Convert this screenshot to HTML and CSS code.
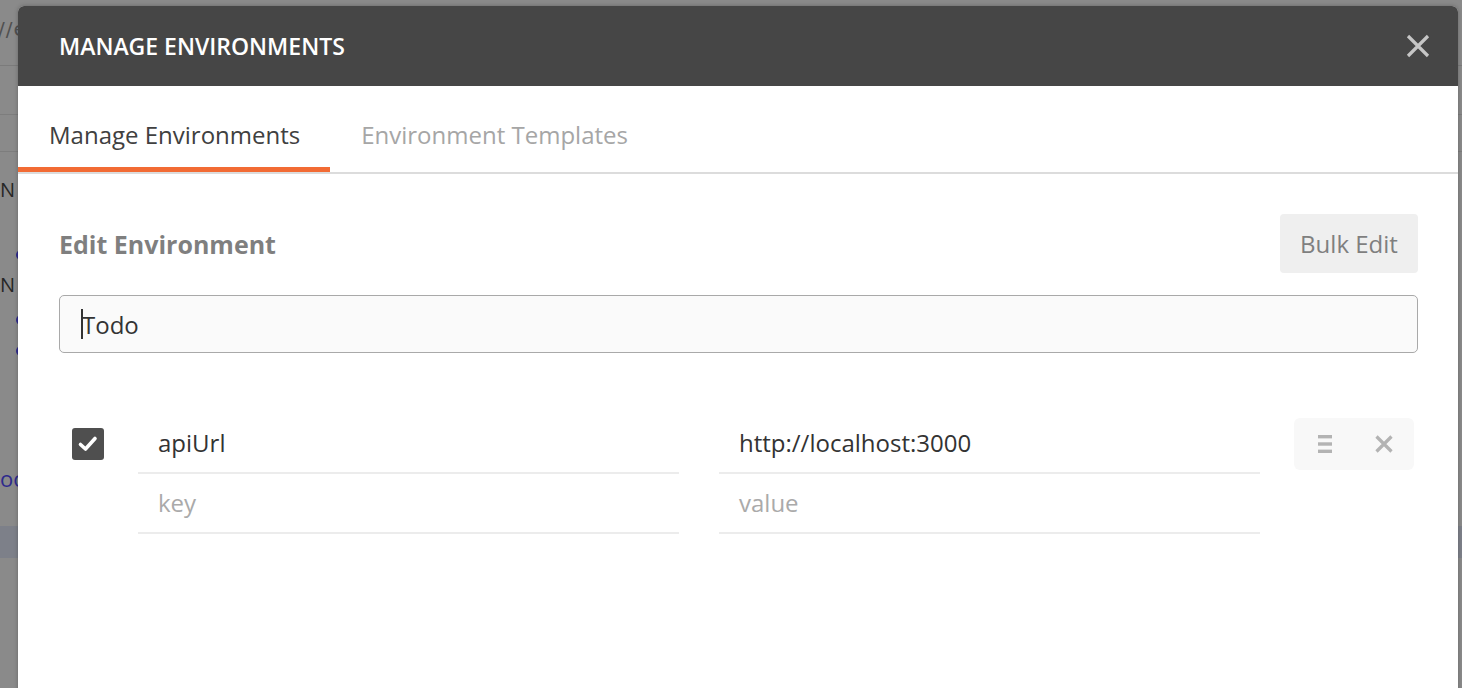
FILE: index.html
```html
<!DOCTYPE html>
<html>
<head>
<meta charset="utf-8">
<link rel="stylesheet" href="styles.css">
</head>
<body>
<div class="app">
  <div class="app-top"><span class="app-url">//e</span></div>
  <div class="app-bar"></div>
  <div class="app-bar2"></div>
  <div class="app-list">
    <div class="app-item n1"><b>N</b></div>
    <div class="app-dot d1"></div>
    <div class="app-item n2"><b>N</b></div>
    <div class="app-dot d2"></div>
    <div class="app-dot d3"></div>
    <div class="app-link">oo</div>
    <div class="app-band"></div>
  </div>
</div>

<div class="modal">
  <div class="modal-header">
    <h1 class="modal-title">MANAGE ENVIRONMENTS</h1>
    <button class="modal-close" aria-label="Close">
      <svg width="24" height="24" viewBox="0 0 24 24"><path d="M2 2L22 22M22 2L2 22" stroke="#c6c6c6" stroke-width="3.2" fill="none"/></svg>
    </button>
  </div>
  <div class="tabs">
    <div class="tab active">Manage Environments</div>
    <div class="tab">Environment Templates</div>
  </div>
  <div class="modal-body">
    <div class="edit-head">
      <h2 class="edit-title">Edit Environment</h2>
      <button class="btn-bulk">Bulk Edit</button>
    </div>
    <div class="name-input"><span class="caret"></span>Todo</div>

    <div class="kv-table">
      <div class="kv-row">
        <div class="kv-check">
          <span class="checkbox">
            <svg width="24" height="24" viewBox="0 0 24 24"><path d="M4.5 12.5L9.5 17L19 6.5" stroke="#fff" stroke-width="3.6" fill="none" stroke-linecap="round" stroke-linejoin="round"/></svg>
          </span>
        </div>
        <div class="kv-cell">apiUrl</div>
        <div class="kv-cell kv-value">http://localhost:3000</div>
        <div class="kv-actions">
          <svg width="16" height="20" viewBox="0 0 16 20"><rect x="1" y="1" width="14" height="3.4" fill="#b3b3b3"/><rect x="1" y="8.3" width="14" height="3.4" fill="#b3b3b3"/><rect x="1" y="15.6" width="14" height="3.4" fill="#b3b3b3"/></svg>
          <svg width="20" height="20" viewBox="0 0 20 20"><path d="M2.5 2.5L17.5 17.5M17.5 2.5L2.5 17.5" stroke="#b3b3b3" stroke-width="3.2" fill="none"/></svg>
        </div>
      </div>
      <div class="kv-row">
        <div class="kv-check"></div>
        <div class="kv-cell placeholder">key</div>
        <div class="kv-cell kv-value placeholder">value</div>
        <div class="kv-actions-empty"></div>
      </div>
    </div>
  </div>
</div>
</body>
</html>
```

FILE: styles.css
```css
* { box-sizing: border-box; }
html, body { margin: 0; padding: 0; }
body {
  width: 1462px;
  height: 688px;
  overflow: hidden;
  background: #8a8a8a;
  font-family: "Open Sans", "Noto Sans", sans-serif;
  position: relative;
}

/* dimmed background app */
.app { width: 100%; height: 100%; display: flex; flex-direction: column; }
.app-top { height: 66px; border-bottom: 1px solid #7b7b7b; padding: 17px 0 0 0; }
.app-url { font-family: "DejaVu Sans", sans-serif; font-size: 20px; color: #505050; margin-left: -2px; letter-spacing: 1px; }
.app-bar { height: 49px; border-bottom: 1px solid #7d7d7d; }
.app-bar2 { height: 37px; border-bottom: 1px solid #7d7d7d; }
.app-list { display: flex; flex-direction: column; }
.app-item { height: 30px; font-size: 20px; color: #262626; line-height: 30px; }
.app-item b { font-weight: 500; }
.n1 { margin-top: 23px; }
.n2 { margin-top: 10px; }
.app-dot { width: 10px; height: 10px; margin-left: 16px; border-radius: 50%; background: #2e2a8c; }
.d1 { margin-top: 45px; }
.d2 { margin-top: 15px; }
.d3 { margin-top: 21px; }
.app-link { margin-top: 107px; font-size: 22px; color: #2e2a8c; line-height: 30px; }
.app-band { height: 32px; margin-top: 33px; background: #7d8089; }

/* modal */
.modal {
  position: absolute;
  left: 18px;
  top: 6px;
  width: 1440px;
  height: 700px;
  background: #fff;
  border-radius: 6px 6px 0 0;
  box-shadow: 0 0 4px rgba(0,0,0,0.25);
  overflow: hidden;
}
.modal-header {
  height: 80px;
  background: #464646;
  display: flex;
  align-items: center;
  justify-content: space-between;
  padding: 0 28px 0 41px;
}
.modal-title {
  margin: 0;
  color: #fff;
  font-size: 23px;
  font-weight: 600;
}
.modal-close {
  border: 0;
  background: none;
  padding: 0;
  width: 24px;
  height: 24px;
  display: flex;
}

.tabs {
  display: flex;
  border-bottom: 2px solid #dcdcdc;
  height: 88px;
}
.tab {
  padding: 11px 30px 0 31px;
  font-size: 24px;
  color: #a6a6a6;
  display: flex;
  align-items: center;
  height: 86px;
}
.tab.active {
  color: #404040;
  border-bottom: 5px solid #f26b34;
  padding-top: 16px;
}

.modal-body { padding: 40px 40px 0 41px; }
.edit-head { display: flex; justify-content: space-between; align-items: center; height: 59px; }
.edit-title { margin: 0; font-size: 25px; font-weight: 700; color: #7f7f7f; }
.btn-bulk {
  width: 138px;
  height: 59px;
  border: 0;
  border-radius: 4px;
  background: #efefef;
  color: #7f7f7f;
  font-family: inherit;
  font-size: 24px;
}
.name-input {
  margin-top: 22px;
  height: 58px;
  border: 1.5px solid #a9a9a9;
  border-radius: 5px;
  background: #fafafa;
  display: flex;
  align-items: center;
  padding-left: 21px;
  font-size: 24px;
  color: #333;
}
.caret { width: 2px; height: 30px; background: #333; margin-right: -1px; }

.kv-table { margin-top: 61px; }
.kv-row { display: flex; align-items: flex-start; }
.kv-check { width: 79px; height: 60px; display: flex; align-items: center; padding-left: 13px; }
.checkbox {
  width: 32px; height: 32px; border-radius: 3px; background: #4f4f4f;
  display: flex; align-items: center; justify-content: center;
}
.kv-cell {
  flex: 1;
  height: 60px;
  border-bottom: 2px solid #ececec;
  padding-left: 20px;
  display: flex;
  align-items: center;
  padding-bottom: 2px;
  font-size: 24px;
  color: #333;
}
.kv-value { margin-left: 40px; }
.placeholder { color: #aaaaaa; }
.kv-actions {
  width: 120px;
  height: 52px;
  margin: 4px 4px 0 34px;
  border-radius: 6px;
  background: #f8f8f8;
  display: flex;
  align-items: center;
  justify-content: space-between;
  padding: 0 20px 0 23px;
}
.kv-actions-empty { width: 120px; margin: 0 4px 0 34px; }
```
